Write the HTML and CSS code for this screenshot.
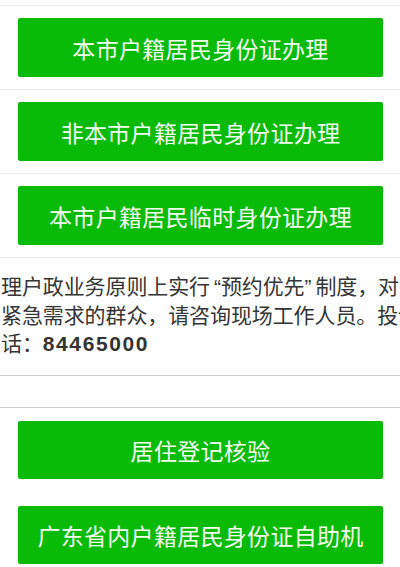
FILE: index.html
```html
<!DOCTYPE html>
<html lang="zh-CN">
<head>
<meta charset="utf-8">
<title>户政业务</title>
<link rel="stylesheet" href="styles.css">
</head>
<body>
<div class="page">
  <div class="row first">
    <a class="btn">本市户籍居民身份证办理</a>
  </div>
  <div class="row">
    <a class="btn">非本市户籍居民身份证办理</a>
  </div>
  <div class="row">
    <a class="btn">本市户籍居民临时身份证办理</a>
  </div>
  <div class="notice">
    <p class="line">理户政业务原则上实行<span class="q open">“</span>预约优先<span class="q close">”</span>制度，对有</p>
    <p class="line">紧急需求的群众，请咨询现场工作人员。投诉</p>
    <p class="line">话：<b class="num">84465000</b></p>
  </div>
  <div class="spacer"></div>
  <div class="group">
    <a class="btn">居住登记核验</a>
    <a class="btn">广东省内户籍居民身份证自助机</a>
  </div>
</div>
</body>
</html>
```

FILE: styles.css
```css
html, body {
  margin: 0;
  padding: 0;
  background: #ffffff;
}
body {
  font-family: "Noto Sans CJK SC", "Noto Sans", sans-serif;
  width: 400px;
  height: 567px;
  overflow: hidden;
}
.page {
  padding-top: 5px;
}
.row {
  border-top: 1px solid #ececec;
  padding: 12px 17px 12px 18px;
}
.btn {
  display: flex;
  align-items: center;
  justify-content: center;
  height: 59px;
  background: #09bb07;
  color: #f4fff2;
  font-size: 23px;
  letter-spacing: 0.3px;
  border-radius: 2px;
  text-decoration: none;
  white-space: nowrap;
}
.notice {
  border-top: 1px solid #ececec;
  border-bottom: 1px solid #d2d2d2;
  padding: 13px 0 18px 1px;
  overflow: hidden;
  color: #353535;
  font-size: 21px;
  letter-spacing: -0.1px;
}
.line {
  margin: 0;
  height: 28.5px;
  line-height: 28.5px;
  white-space: nowrap;
}
.q {
  font-family: "Liberation Sans", "Noto Sans", sans-serif;
  line-height: 1;
}
.q.open {
  padding-left: 4px;
}
.q.close {
  padding-right: 4px;
}
.num {
  font-family: "Liberation Sans", "Noto Sans", sans-serif;
  font-weight: bold;
  letter-spacing: 1.6px;
  line-height: 1;
  color: #333333;
}
.spacer {
  height: 31px;
}
.group {
  border-top: 1px solid #d2d2d2;
  padding: 13px 17px 12px 18px;
  display: flex;
  flex-direction: column;
  gap: 27px;
}
.group .btn {
  height: 58px;
}
```
